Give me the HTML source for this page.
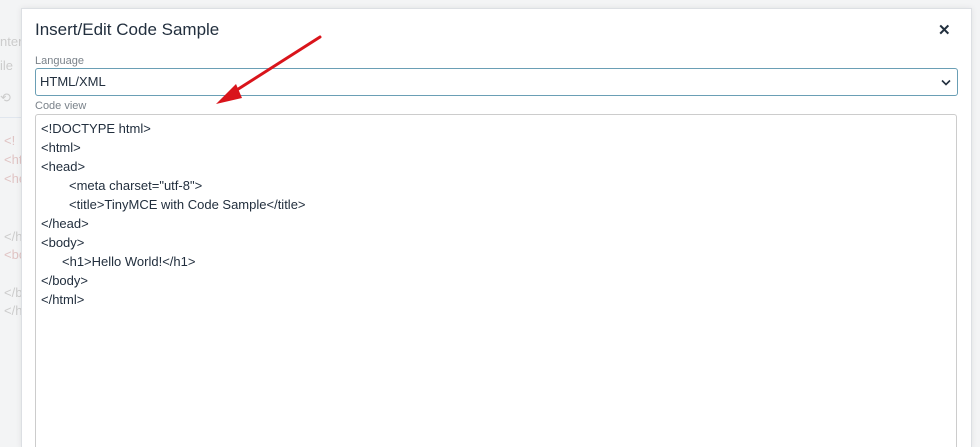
<!DOCTYPE html>
<html style="width:980px;height:447px;overflow:hidden"><head><style>
body{margin:0;width:980px;height:447px;overflow:hidden;background:#f3f4f5;font-family:"Liberation Sans",sans-serif;position:relative}
.bg{position:absolute;color:#ccc;font-size:13px}
.dlg{position:absolute;left:21px;top:8px;width:949px;height:439px;background:#fff;border:1px solid #dcdfe3;border-bottom:none;box-shadow:0 0 6px rgba(0,0,0,.08);overflow:hidden}
.t{position:absolute;left:13px;top:11px;font-size:17px;color:#222f3e}
.x{position:absolute;left:916px;top:12px;font-size:15px;font-weight:bold;color:#222f3e}
.lbl{position:absolute;left:13px;font-size:11px;color:#7a828a}
.sel{position:absolute;left:13px;top:59px;width:917px;height:26px;border:1px solid #6a9fb5;border-radius:3px;font-size:13px;color:#222f3e;line-height:26px;padding-left:4px}
.code{position:absolute;left:13px;top:105px;width:920px;height:334px;border:1px solid #ccc;border-bottom:none;border-radius:3px 3px 0 0;font-size:13px;color:#222f3e}
.code div{position:absolute;white-space:pre}
</style></head><body>
<div class="bg" style="left:0;top:34px">nter</div>
<div class="bg" style="left:0;top:58px">ile</div>
<div class="bg" style="left:0;top:90px">⟲</div>
<div class="bg" style="left:4px;top:133px;color:#e0c4c4">&lt;!</div>
<div class="bg" style="left:4px;top:152px;color:#e0c4c4">&lt;ht</div>
<div class="bg" style="left:4px;top:171px;color:#e0c4c4">&lt;he</div>
<div class="bg" style="left:4px;top:229px">&lt;/h</div>
<div class="bg" style="left:4px;top:247px;color:#e0c4c4">&lt;bo</div>
<div class="bg" style="left:4px;top:285px">&lt;/b</div>
<div class="bg" style="left:4px;top:303px">&lt;/h</div>
<div style="position:absolute;left:0;top:117px;width:22px;height:1px;background:#e0e6ee"></div>
<div class="dlg">
<div class="t">Insert/Edit Code Sample</div>
<div class="x">✕</div>
<div class="lbl" style="top:46px">Language</div>
<div class="sel">HTML/XML<svg style="position:absolute;right:6px;top:10px" width="10" height="7" viewBox="0 0 10 7"><path d="M1 1.5l4 4 4-4" stroke="#222f3e" stroke-width="1.6" fill="none"/></svg></div>
<div class="lbl" style="top:91px">Code view</div>
<div class="code">
<div style="left:5px;top:6px">&lt;!DOCTYPE html&gt;</div>
<div style="left:5px;top:25px">&lt;html&gt;</div>
<div style="left:5px;top:44px">&lt;head&gt;</div>
<div style="left:33px;top:63px">&lt;meta charset="utf-8"&gt;</div>
<div style="left:33px;top:82px">&lt;title&gt;TinyMCE with Code Sample&lt;/title&gt;</div>
<div style="left:5px;top:101px">&lt;/head&gt;</div>
<div style="left:5px;top:120px">&lt;body&gt;</div>
<div style="left:26px;top:139px">&lt;h1&gt;Hello World!&lt;/h1&gt;</div>
<div style="left:5px;top:158px">&lt;/body&gt;</div>
<div style="left:5px;top:177px">&lt;/html&gt;</div>
</div>
</div>
<svg style="position:absolute;left:0;top:0" width="980" height="447">
<path d="M320 37 L232 93" stroke="#d9141b" stroke-width="3" stroke-linecap="round"/>
<path d="M216 104 L236 84 L242 98 Z" fill="#d9141b"/>
</svg>
</body></html>
